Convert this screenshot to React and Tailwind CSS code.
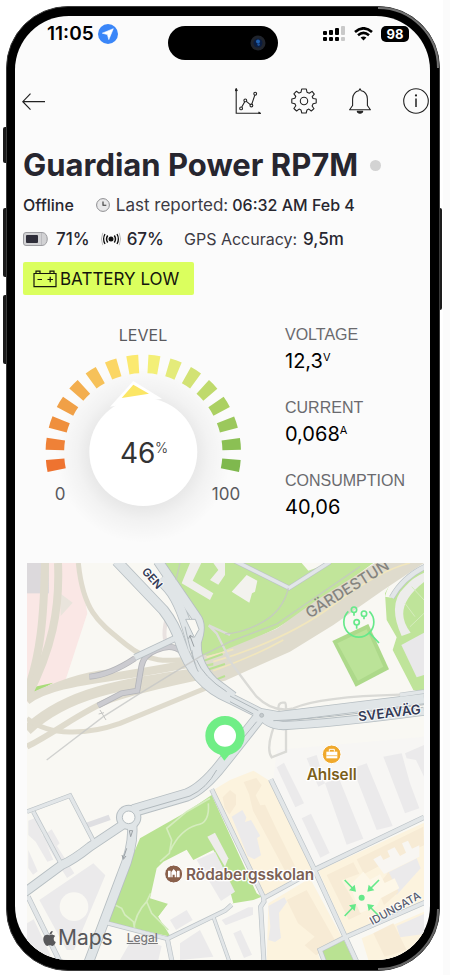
import { FaApple } from "react-icons/fa";

const SEGMENTS = [
  "#ee7330", "#ef8137", "#ef8f3d", "#f0a047", "#f3ae4f", "#f6c159", "#fbd665", "#fbe96f",
  "#f3ef77", "#e4eb7a", "#d2e274", "#bfda6c", "#abd062", "#9bc85c", "#8bc054", "#7fb84e",
];

const METRICS = [
  { label: "VOLTAGE", value: "12,3", unit: "V" },
  { label: "CURRENT", value: "0,068", unit: "A" },
  { label: "CONSUMPTION", value: "40,06", unit: "" },
];

// Map geometry, in map units (3 units = 1px at the default width)
const RAILS = [
  ["M135 39 C132 180 125 330 70 450", 24],
  ["M174 39 C180 180 155 300 82 440", 24],
  ["M235 39 C250 190 300 220 380 285 S520 330 620 322", 15],
  ["M81 452 C180 380 360 395 700 312", 24],
  ["M81 448 C190 385 280 370 330 365", 14],
  ["M81 540 C220 410 400 400 720 350", 32],
  ["M81 590 C170 545 250 480 330 450 S520 395 700 360", 18],
  ["M81 505 C150 560 260 555 360 520 L640 405", 15],
];

const TUNNELS = [
  "M268 380 Q330 375 405 325",
  "M294 467 L365 430 L412 422 L424 350 Q430 315 470 300 Q515 280 545 305",
];

const MAIN_ROADS = [
  ["M350 33 L490 180 Q525 225 540 275 Q580 400 690 445 L780 490 L835 500 L1272 446", 28],
  ["M474 33 L588 200 Q608 225 590 275 Q585 340 640 395 L700 440", 26],
  ["M480 88 L505 115 Q545 160 580 300", 28],
  ["M780 490 Q800 525 850 527 Q1000 520 1272 484", 22],
  ["M785 492 L668 640 Q610 715 560 735 L400 782", 34],
  ["M372 822 L270 890 Q220 930 185 945 L70 1030", 24],
  ["M395 815 Q405 880 365 975 L265 1240", 26],
  ["M532 262 L405 322", 16],
];

const SIDE_ROADS = [
  ["M81 785 L210 737 L280 872", 10],
  ["M100 785 L187 948", 10],
  ["M84 1040 L182 1240", 12],
  ["M318 1118 L502 1166 L675 1082 L695 1064", 10],
  ["M790 1045 L942 962", 10],
  ["M502 1166 L517 1240", 11],
  ["M635 718 L790 1040 L792 1055 L782 1070 L792 1240", 11],
  ["M812 688 L940 952 L1072 1240", 12],
  ["M942 960 L1272 802", 12],
  ["M975 1240 L960 1200 L1035 1162 L1280 1055", 11],
  ["M640 1100 L690 1240", 8],
  ["M705 33 L867 114 L990 36", 11],
  ["M1175 143 Q1210 80 1280 48", 13],
  ["M1200 435 L1272 425", 10],
];

const PALE_BUILDINGS = [
  "M125 860 l30 -22 l24 42 l-8 8 l52 82 l-22 14z",
  "M85 812 l20 -8 l55 125 l-18 6 l-35 -60 l-22 -20z",
  "M85 900 l28 64 l-14 10 l-14 -20z",
  "M118 1050 L280 940 L316 976 L222 1200 L200 1200z",
  "M81 1120 l20 -12 l52 110 l-72 0z",
  "M830 652 l22 -14 l60 122 l-26 12z",
  "M905 805 l28 -14 l56 118 l-28 14z",
  "M975 700 L1015 680 L1090 866 L1040 884 Z M920 625 L950 615 L975 700 L955 710 Z",
  "M1058 655 L1100 640 L1178 828 L1130 840 Z",
  "M1150 620 L1205 610 L1230 700 L1258 775 L1215 790 Z",
  "M1215 610 L1272 585 V680 L1248 630 L1220 625 Z",
  "M695 800 l32 -20 l12 22 l-4 14 l18 -6 l28 48 l-10 6 l12 52 l-20 12 l-20 -10z",
  "M590 930 l55 -25 l60 120 l-42 28z",
  "M510 1110 l50 -30 l18 30 l-50 30z",
  "M665 1110 l80 -38 l14 0 l0 22 l-82 32z",
  "M540 1180 l60 -40 l40 80 l-100 10z",
  "M700 1150 l22 -10 l34 74 l-24 10z",
  "M805 1068 l48 -26 l8 14 l-24 32 l2 44 l4 32 l-18 12 l-20 -6 l6 -40z",
  "M400 1160 l-40 70 l115 0 l10 -42z",
  "M1190 1128 l82 -36 l0 60 l-72 10z",
  "M1160 970 L1250 925 L1262 955 L1190 1035 Z",
];

const TAN_BUILDINGS = [
  "M731 696 l38 -12 l16 22 l-8 14 l-10 16 l14 30 l14 -2 l34 72 l72 144 l-30 12 l-112 -210 l-12 -50z",
  "M668 742 l22 -22 l18 14 l0 30 l-20 30 l-14 -20z",
  "M980 975 l80 -38 l18 34 l-54 20 l60 100 l-38 18z",
  "M1070 928 l200 -98 l2 56 l-130 60 l-50 26z",
  "M1130 1010 l36 -44 l30 60 l-44 40z",
  "M860 1050 l60 -30 l90 160 l-62 36 l-34 -30 l30 -26 l-50 -40z",
  "M1120 1150 l60 -30 l40 80 l-66 20z",
];

function BarsIcon() {
  return (
    <svg className="h-4 w-6" viewBox="0 0 24 16" aria-label="Signal">
      <g fill="#000">
        <rect x="1" y="5" width="4" height="4" rx="1" />
        <rect x="7" y="4" width="4" height="5" rx="1" />
        <rect x="13" y="2" width="4" height="7" rx="1" />
        <rect x="1" y="11" width="4" height="4" rx="1" />
        <rect x="7" y="11" width="4" height="4" rx="1" />
        <rect x="13" y="11" width="4" height="4" rx="1" />
      </g>
      <rect x="19" y="0" width="4" height="9" rx="1" fill="#c9c9c9" />
      <rect x="19" y="11" width="4" height="4" rx="1" fill="#c9c9c9" />
    </svg>
  );
}

function StatusBar() {
  return (
    <div className="grid grid-cols-[1fr_110px_1fr] items-start pt-1.5">
      <div className="flex items-center gap-1 pl-8">
        <span className="text-[19px] leading-6 font-semibold text-black">11:05</span>
        <svg className="size-5" viewBox="0 0 20 20">
          <circle cx="10" cy="10" r="10" fill="#3a86f8" />
          <path d="M15.3 4.7 L10.8 15.6 L9.4 10.6 L4.3 9.2 Z" fill="#fff" stroke="#fff" strokeWidth=".6" strokeLinejoin="round" />
        </svg>
      </div>
      <div className="mt-1 flex h-[34px] items-center justify-end rounded-full bg-black pr-3">
        <svg className="size-4" viewBox="0 0 16 16">
          <circle cx="8" cy="8" r="7.5" fill="#20242c" />
          <circle cx="8" cy="8" r="4.5" fill="#0a1c3f" />
          <circle cx="8" cy="6.5" r="2" fill="#1f5fae" />
          <circle cx="8.6" cy="9.6" r="1.3" fill="#1b4f96" />
        </svg>
      </div>
      <div className="flex items-center justify-end gap-2 pt-1 pr-[21px]">
        <BarsIcon />
        <svg className="h-[14px] w-[19px]" viewBox="0 0 19 14" fill="none" stroke="#000" strokeWidth="2.6">
          <path d="M1 5 Q9.5 -2.4 18 5" />
          <path d="M4 8.3 Q9.5 3.6 15 8.3" />
          <path d="M6.6 10.6 Q9.5 8.2 12.4 10.6 L9.5 13.6 Z" fill="#000" stroke="none" />
        </svg>
        <span className="flex h-4 w-7 items-center justify-center rounded-[5px] bg-black text-[13px] leading-4 font-bold text-white">98</span>
      </div>
    </div>
  );
}

function Toolbar() {
  return (
    <header className="mt-7 flex items-center justify-between pr-px pl-[7px]">
      <button type="button" aria-label="Back">
        <svg className="h-[26px] w-6" viewBox="0 0 24 26" fill="none" stroke="#222" strokeWidth="1.2">
          <path d="M23 13.7 H0.8 M8.5 5.7 L0.8 13.7 L8.5 21.7" />
        </svg>
      </button>
      <div className="flex gap-[30px]">
        <button type="button" aria-label="Statistics">
          <svg className="size-[26px]" viewBox="0 0 26 26" fill="none" stroke="#222" strokeWidth="1.1">
            <path d="M1.2 1 V25.3 H25.5 M0 3 L1.2 .6 L2.4 3 M23.5 24 L25.6 25.3 L23.5 26" />
            <circle cx="6.1" cy="20.4" r="1.4" />
            <circle cx="10.3" cy="12.4" r="1.4" />
            <circle cx="16.4" cy="17.5" r="1.4" />
            <circle cx="20.2" cy="5.7" r="1.4" />
            <path d="M6.8 19.1 L9.7 13.7 M11.4 13.3 L15.3 16.6 M16.8 16.1 L19.8 7.1" />
          </svg>
        </button>
        <button type="button" aria-label="Settings">
          <svg className="size-[26px]" viewBox="0 0 26 26" fill="none" stroke="#222" strokeWidth="1.1" strokeLinejoin="round">
            <circle cx="13" cy="13" r="3.7" />
            <path d="M10.7 1 H15.3 L16 4.2 L18.3 5.2 L21.1 3.4 L23.3 6.2 L21.2 8.7 L22.1 10.5 L25.2 11 V15 L22.1 15.7 L21.1 18 L23 20.7 L20.3 23 L17.8 21.1 L16 21.9 L15.2 25 H10.8 L10 21.9 L8.1 21.1 L5.6 23 L2.9 20.5 L4.8 17.8 L3.9 15.7 L.8 15 V11 L3.9 10.3 L4.8 8.3 L2.9 5.8 L5.5 3.2 L8 5.1 L10 4.2 Z" />
          </svg>
        </button>
        <button type="button" aria-label="Notifications">
          <svg className="size-[26px]" viewBox="0 0 26 26" fill="none" stroke="#222" strokeWidth="1.1" strokeLinejoin="round">
            <path d="M2.6 21.8 L5.6 17.5 V11 C5.6 6.5 8.5 3.2 11.8 2.8 L13 .8 L14.2 2.8 C17.7 3.2 20.4 6.5 20.4 11 V17.5 L23.4 21.8 Z" />
            <path d="M10.3 23.3 H15.7 C15.4 25.8 10.6 25.8 10.3 23.3 Z" fill="#222" />
          </svg>
        </button>
        <button type="button" aria-label="Information">
          <svg className="size-[26px]" viewBox="0 0 26 26" fill="none" stroke="#222" strokeWidth="1.1">
            <circle cx="13" cy="13" r="12.3" />
            <path d="M13 10.5 V19" strokeWidth="1.5" />
            <circle cx="13" cy="7.4" r="1.1" fill="#222" stroke="none" />
          </svg>
        </button>
      </div>
    </header>
  );
}

function DeviceInfo() {
  return (
    <section className="pr-3 pl-2 text-[#27262f]">
      <div className="mt-[33px] flex items-center gap-3">
        <h1 className="text-[31px] leading-9 font-bold whitespace-nowrap">Guardian Power RP7M</h1>
        <span className="size-[11px] shrink-0 rounded-full bg-[#d3d3d3]" />
      </div>

      <div className="mt-2.5 flex items-center text-[16px] leading-6 whitespace-nowrap">
        <span className="font-medium">Offline</span>
        <svg className="mr-1.5 ml-[22px] size-[14px]" viewBox="0 0 14 14" fill="none">
          <circle cx="7" cy="7" r="6.4" fill="#e9e9ea" stroke="#8d8d90" />
          <path d="M7 3.5 V7.3 H10.3" stroke="#333" strokeWidth="1.1" />
        </svg>
        <span className="text-[17px] text-[#3b3a43]">Last reported:</span>
        <span className="ml-1 font-medium">06:32 AM Feb 4</span>
      </div>

      <div className="mt-2.5 flex items-center text-[16px] leading-6 whitespace-nowrap">
        <svg className="mr-2 h-[14px] w-[25px]" viewBox="0 0 25 14">
          <path d="M3 .5 H19 C26 .5 26 13.5 19 13.5 H3 Q.5 13.5 .5 11 V3 Q.5 .5 3 .5 Z" fill="#d2d2d4" stroke="#9c9ca0" />
          <rect x="3" y="3" width="12" height="8" rx="1" fill="#2e2d39" />
          <path d="M18.5 1 V13" stroke="#bcbcc0" />
        </svg>
        <span className="text-[17px] font-medium">71%</span>
        <svg className="mr-1.5 ml-[11px] h-4 w-5" viewBox="0 0 20 16" fill="none" stroke="#111">
          <circle cx="10" cy="8" r="2.5" fill="#111" stroke="none" />
          <path d="M6.7 4.5 Q4.4 8 6.7 11.5 M13.3 4.5 Q15.6 8 13.3 11.5" strokeWidth="1.5" />
          <path d="M4 3 Q1.2 8 4 13 M16 3 Q18.8 8 16 13" strokeWidth="1.3" />
          <path d="M1.8 1.8 Q-1 8 1.8 14.2 M18.2 1.8 Q21 8 18.2 14.2" stroke="#bbb" />
        </svg>
        <span className="text-[17px] font-medium">67%</span>
        <span className="ml-5 text-[#3b3a43]">GPS Accuracy:</span>
        <span className="ml-1.5 text-[17px] font-medium">9,5m</span>
      </div>

      <div className="mt-[11px] inline-flex h-[33px] items-center gap-[3px] rounded-[2px] bg-[#dbff5e] pr-[15px] pl-2.5 text-[17px] leading-6 text-[#14150c]">
        <svg className="h-[18px] w-6" viewBox="0 0 24 18" fill="none" stroke="#14150c" strokeWidth="1.2">
          <path d="M1 3.5 H23 V16.6 H1 Z M3 3.3 V1.2 H7 V3.3 M17 3.3 V1.2 H21 V3.3 M4.5 9.5 H9 M14.5 9.5 H20 M17.2 6.8 V12.2" />
        </svg>
        BATTERY LOW
      </div>
    </section>
  );
}

function Gauge() {
  return (
    <div className="flex flex-col items-center">
      <h2 className="text-[16px] leading-6 text-[#5a5a5e]">LEVEL</h2>
      <svg className="h-[196px] w-full" viewBox="0 0 240 196" role="img" aria-label="Level 46%">
        <defs>
          <radialGradient id="halo">
            <stop offset=".5" stopColor="#000" stopOpacity=".1" />
            <stop offset=".75" stopColor="#000" stopOpacity=".035" />
            <stop offset="1" stopColor="#000" stopOpacity="0" />
          </radialGradient>
        </defs>
        <circle cx="120" cy="108" r="88" fill="url(#halo)" />
        {SEGMENTS.map((color, i) => (
          <path
            key={color}
            d="M-6 -97.5 Q0 -98 6 -97.5 L4.9 -79 Q0 -79.4 -4.9 -79 Z"
            fill={color}
            transform={`translate(120.3 105.4) rotate(${-98 + i * 13.07})`}
          />
        ))}
        <path d="M110.3 34 L139 51.7 L87 59.7 Z" fill="#fff" />
        <circle cx="120.3" cy="105" r="54" fill="#fff" />
        <path d="M110.3 37.7 L126 46.7 L98.7 51 Z" fill="#fbe665" />
        <text x="97" y="116" fontSize="28" fill="#333">46</text>
        <text x="132" y="106" fontSize="14" fontWeight="300" fill="#333">%</text>
        <text x="37" y="153" textAnchor="middle" fontSize="17" fill="#5a5a5e">0</text>
        <text x="203" y="153" textAnchor="middle" fontSize="17" fill="#5a5a5e">100</text>
      </svg>
    </div>
  );
}

function DeviceMap() {
  return (
    <div className="relative mt-5 mr-1.5 ml-3 aspect-square overflow-hidden bg-[#f9f8f3]">
      <svg className="block size-full" viewBox="81 39 1191 1191" preserveAspectRatio="xMidYMid slice" fill="none">
        {/* areas */}
        <path d="M81 39 H235 L262 190 L195 395 L100 415 L81 460 Z" fill="#fae7e5" />
        <path d="M81 39 H147 V130 H81 Z" fill="#dcd9dc" />
        <path d="M180 130 l38 28 l-36 40z" fill="#e9e4dc" />
        <path d="M98 412 L160 398 L130 415 L95 428 Z" fill="#a9dc7a" />
        <path d="M490 39 H1120 L1050 90 L945 165 L830 235 L675 310 L640 400 L590 330 L612 220 Z" fill="#c1e59a" />
        <path d="M1155 130 L1195 60 L1250 39 H1272 V430 L1240 420 L1178 300 L1190 262 L1160 210 Z" fill="#bfe49a" />
        <path d="M1175 143 Q1205 85 1280 52 L1272 39 H1230 Q1170 80 1155 140 Z" fill="#f9f8f3" />
        <path d="M1280 90 Q1170 170 1232 248 L1205 258 Q1160 160 1215 110 Q1240 80 1280 65 Z" fill="#ededeb" />
        <path d="M1204 285 L1272 248 V375 L1250 382 Z" fill="#e9e8ea" />
        <path d="M570 39 L545 100 L630 150 L640 130 L578 92 L604 39 Z M640 39 L655 60 L630 90 L655 104 L675 75 L675 39 Z" fill="#f0efec" />
        <path d="M740 75 L772 92 L765 125 L756 130 L748 158 L695 125 Z" fill="#f3f2ee" />
        <path d="M905 39 H990 L925 62 Z" fill="#f9f8f3" />
        <path d="M560 785 L635 735 L770 1030 L785 1040 L760 1050 L700 1060 L600 1080 L505 1060 L475 1100 L512 1160 L315 1115 L420 865 Z" fill="#b9e292" />
        <path d="M560 899 L580 930 L640 900 L676 970 L700 1060 L640 1085 L515 1158 L475 1100 L505 1062 L450 1045 L470 955 L490 935 Z" fill="#f9f8f3" />
        <path d="M622 860 L645 848 L685 925 L675 950 Z" fill="#eeeceb" />
        <path d="M640 720 L690 690 L760 662 L805 690 L940 955 L790 1038 L700 840 Z" fill="#fcf3de" />
        <path d="M955 962 L1272 818 V1050 L1040 1152 Z" fill="#fcf3de" />
        <path d="M805 1060 L930 985 L1025 1160 L950 1200 L960 1230 H800 Z M1085 1165 L1272 1085 V1230 H1105 Z" fill="#fcf3de" />
        <path d="M830 600 L1272 560 V795 L945 950 L820 690 Z" fill="#f7f6f4" />

        {/* buildings */}
        {PALE_BUILDINGS.map((d) => <path key={d} d={d} fill="#ebeaeb" />)}
        {TAN_BUILDINGS.map((d) => <path key={d} d={d} fill="#f7ebd5" />)}
        <path d="M258 818 l68 -24 l6 16 l-68 24z" fill="#dfdfe2" />
        <circle cx="222" cy="1070" r="43" fill="#f9f8f3" />
        <path d="M1050 1005 l40 -40 l20 24 l30 -16 l14 26 l30 -14 l14 30 l-56 30 l-12 24 l-50 20z" fill="#fdf7e8" />
        <path d="M1120 928 l22 -12 l8 14 l20 -10 l-8 -18 l22 -10 l16 26 l18 -10 l-12 -28 l18 -8 l12 24 l22 -10 v34 l-106 52 z" fill="#f8f6f2" />
        <path d="M965 1203 L1032 1171 L1060 1230 H975 Z" fill="#b9e292" />
        <path d="M997 273 L1105 222 L1167 358 L1067 410 Z" fill="#add98a" />
        <path d="M1012 280 L1100 238 L1150 350 L1074 392 Z" fill="#bbe398" />

        {/* railway */}
        {RAILS.map(([d, w]) => <path key={d} d={d} stroke="#dfdbcd" strokeWidth={w} />)}
        <path d="M640 325 L675 300 L830 236 L950 150 L1090 62 L1125 39 H1272 L1150 120 L1000 225 L870 305 L780 345 L675 392 L640 400 Z" fill="#dfdbcd" />
        <path d="M640 335 Q860 270 1000 165 T1230 39 M640 362 Q760 320 850 270 M620 322 L700 298" stroke="#f1e6bd" strokeWidth="5" />
        <path d="M605 335 L668 312 M620 360 L675 342 M650 388 L675 378" stroke="#b9e292" strokeWidth="6" />
        <path d="M300 480 L318 510 M296 492 L312 488" stroke="#c5c5c3" strokeWidth="3" />
        <path d="M626 226 L650 250 L690 330 M626 226 L690 255" stroke="#dcdcd8" strokeWidth="7" />
        <path d="M675 312 Q730 390 770 440 Q820 490 880 475 Q960 440 1200 434 M835 475 Q835 458 848 458 H855 Q858 460 858 475 V605 L815 622 Q800 600 815 550 L838 478" stroke="#dadad6" strokeWidth="7" />
        <path d="M500 205 Q490 245 495 268" stroke="#e9e2e0" strokeWidth="12" />
        {TUNNELS.map((d) => <path key={d} d={d} stroke="#b4b5b9" strokeWidth="18" />)}
        {TUNNELS.map((d) => <path key={d} d={d} stroke="#cbcbd0" strokeWidth="13" />)}

        {/* park paths */}
        <path d="M630 745 L560 785 L500 835 L515 870 L508 910 L480 935 M625 760 Q630 820 590 825 Q540 840 512 900 M345 1065 L365 1075 L375 1095 L400 1115 L405 1140 M400 1145 Q405 1090 440 1055 L455 1090 L505 1140 M440 1055 L452 1030" stroke="#d5ecbe" strokeWidth="5" />
        <path d="M1215 160 L1245 200 M1235 110 L1272 150 M1230 230 L1272 190" stroke="#d5ecbe" strokeWidth="3" />

        {/* roads */}
        {SIDE_ROADS.map(([d, w]) => <path key={d} d={d} stroke="#bcc3c7" strokeWidth={w + 4} />)}
        {MAIN_ROADS.map(([d, w]) => <path key={d} d={d} stroke="#b6bec2" strokeWidth={w + 5} />)}
        <circle cx="386" cy="802" r="38" fill="#b6bec2" />
        {SIDE_ROADS.map(([d, w]) => <path key={d} d={d} stroke="#e2e6e8" strokeWidth={w} />)}
        {MAIN_ROADS.map(([d, w]) => <path key={d} d={d} stroke="#e0e5e7" strokeWidth={w} />)}
        <circle cx="386" cy="802" r="35" fill="#e0e5e7" />
        <circle cx="386" cy="802" r="19" fill="#fafaf7" stroke="#b6bec2" strokeWidth="3" />
        <path d="M557 208 H586 L597 238 L583 262 Z" fill="#f9f8f3" stroke="#b6bec2" strokeWidth="3" />
        <path d="M555 230 Q580 340 595 365 M590 330 Q610 380 680 425 M690 438 L775 482 M820 512 Q960 508 1272 464 M418 782 L570 738 Q620 715 650 660 M770 515 L700 600 M690 455 L760 492" stroke="#b0b8bc" strokeWidth="3" />
        <path d="M582 290 L570 258 M566 266 L570 256 L580 262 M380 895 L370 925 M366 915 L370 928 L378 918 M388 842 H398 L392 860 Z" stroke="#999fa3" strokeWidth="3" />
        <circle cx="785" cy="496" r="6" fill="#c4cacd" stroke="#a6adb1" strokeWidth="2" />
        <path d="M140 630 L310 500 L420 430 L600 320 L690 275 L830 222 L1080 50 M865 114 Q850 180 790 215 T675 252 M540 39 L528 90" stroke="#c6c7c5" strokeOpacity=".8" strokeWidth="4" />

        {/* street names, only the part inside the view */}
        <g fontWeight="600" stroke="#fff" strokeOpacity=".8" strokeWidth="6" paintOrder="stroke" strokeLinejoin="round">
          <text transform="translate(424 66) rotate(48)" fontSize="34" fill="#333a56">GEN</text>
          <text transform="translate(1076 514) rotate(-7)" fontSize="40" fill="#333a56">SVEAVÄG</text>
          <text transform="translate(1117 1126) rotate(-29)" fontSize="33" fontWeight="500" fill="#555b70">IDUNGATA</text>
        </g>
        <text transform="translate(929 206) rotate(-32)" fontSize="46" fontWeight="500" fill="#85847f">GÄRDESTUN</text>

        {/* search and target markers */}
        <g stroke="#66e98a" strokeWidth="5" fill="none">
          <path d="M1045 184 A45 45 0 1 0 1108 184 M1110 250 L1137 279" />
          <circle cx="1062" cy="179" r="8" />
          <path d="M1062 187 V197 M1092 199 V208 M1070 225 V236" />
          <circle cx="1092" cy="191" r="8" />
          <circle cx="1070" cy="217" r="8" />
          <path d="M1034 990 L1060 1017 M1137 990 L1110 1017 M1034 1098 L1060 1071 M1134 1095 L1110 1071" />
        </g>
        <path d="M1068 1025 L1064 1004 L1047 1021 Z M1102 1025 L1106 1004 L1123 1021 Z M1068 1062 L1064 1083 L1047 1066 Z M1102 1062 L1106 1083 L1123 1066 Z" fill="#66e98a" />
        <circle cx="1085" cy="1043" r="9" fill="#66e98a" />

        {/* device pin */}
        <path d="M652 604 L673 632 L697 604 Z" fill="#70ee86" />
        <circle cx="675" cy="557" r="46" fill="#fff" stroke="#70ee86" strokeWidth="26" />

        {/* places */}
        <circle cx="995" cy="613" r="28" fill="#f0a92c" stroke="#fff" strokeWidth="3" />
        <path d="M979 605 H1012 V625 H979 Z" fill="#fff" />
        <path d="M988 605 V598 H1003 V605" stroke="#fff" strokeWidth="3" />
        <path d="M979 617 H1012" stroke="#f0a92c" strokeWidth="2" />
        <circle cx="521" cy="972" r="27" fill="#8a604a" stroke="#fff" strokeWidth="3" />
        <path d="M504 962 H512 V982 H504 Z M531 962 H539 V982 H531 Z M514 966 L521 957 L529 966 V982 H524 V974 H518 V982 H514 Z" fill="#fff" />
        <g fontSize="46" fontWeight="600" stroke="#fff" strokeWidth="8" paintOrder="stroke" strokeLinejoin="round">
          <text x="995" y="690" textAnchor="middle" fill="#7c5f1b">Ahlsell</text>
          <text x="558" y="991" fill="#7b5f55">Rödabergsskolan</text>
        </g>
      </svg>

      <div className="absolute bottom-2 left-3.5 flex items-center text-[#58585a]">
        <FaApple className="size-[17px]" />
        <span className="text-[21px] leading-7">Maps</span>
        <a href="#legal" className="ml-3.5 text-[12px] leading-7 font-medium text-[#77777a] underline">Legal</a>
      </div>
    </div>
  );
}

export default function App() {
  return (
    <div className="border-r-[7px] border-[#fbfbfb] bg-white pt-1.5 pr-[3px] pb-1 pl-1.5 font-['Inter','Liberation_Sans',sans-serif]">
      <div className="relative">
        {/* side buttons */}
        <span className="absolute top-[121px] -left-[3px] h-9 w-1 rounded-l-xs bg-[#1a1a1a]" />
        <span className="absolute top-[202px] -left-[3px] h-[69px] w-1 rounded-l-xs bg-[#1a1a1a]" />
        <span className="absolute top-[289px] -left-[3px] h-[69px] w-1 rounded-l-xs bg-[#1a1a1a]" />
        <span className="absolute top-[202px] -right-0.5 h-[102px] w-1 rounded-r-xs bg-[#1a1a1a]" />

        <div className="relative rounded-[62px] border border-[#3a3a3a] bg-black pt-[9px] pr-[9px] pb-2.5 pl-2">
          <main className="overflow-hidden rounded-[54px] bg-[#fbfbfb]">
            <StatusBar />
            <Toolbar />
            <DeviceInfo />
            <section className="mt-7 grid grid-cols-[240px_1fr] gap-[22px] pl-2">
              <Gauge />
              <dl className="flex flex-col gap-[21px]">
                {METRICS.map((m) => (
                  <div key={m.label}>
                    <dt className="font-['Liberation_Sans',sans-serif] text-[16px] leading-6 text-[#6a6a6e]">{m.label}</dt>
                    <dd className="flex text-[20px] leading-7 text-black">
                      {m.value}
                      <span className="text-[11px] leading-5">{m.unit}</span>
                    </dd>
                  </div>
                ))}
              </dl>
            </section>
            <DeviceMap />
          </main>
          {/* metal highlights on the corners */}
          <svg className="absolute -top-px -right-px size-[72px]" viewBox="0 0 72 72" fill="none">
            <path d="M10 2 A60 60 0 0 1 70 62" stroke="#8d8d8d" strokeWidth="2" strokeOpacity=".8" />
          </svg>
          <svg className="absolute -right-px -bottom-px size-[72px]" viewBox="0 0 72 72" fill="none">
            <path d="M70 10 A60 60 0 0 1 10 70" stroke="#8d8d8d" strokeWidth="2" strokeOpacity=".7" />
          </svg>
        </div>
      </div>
    </div>
  );
}
